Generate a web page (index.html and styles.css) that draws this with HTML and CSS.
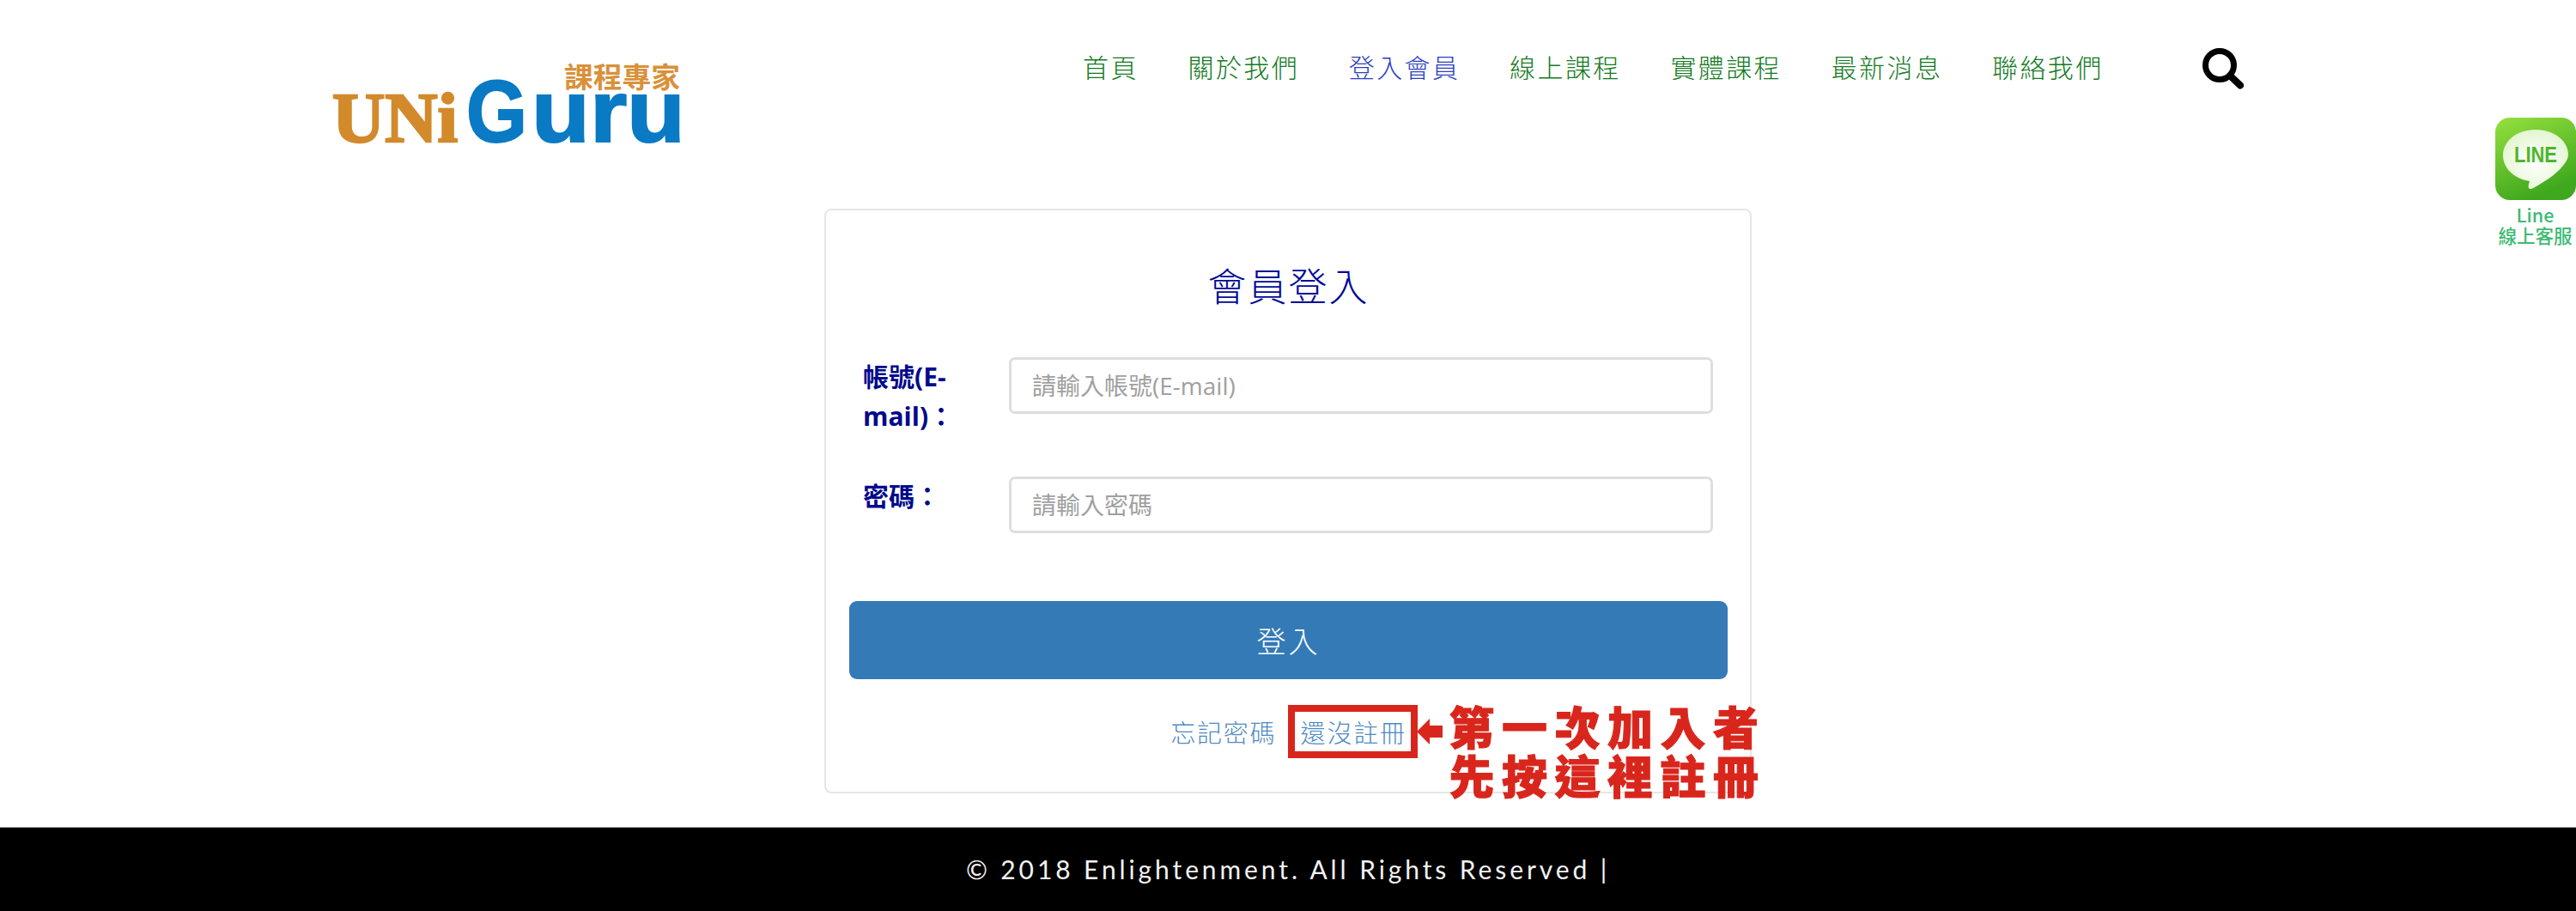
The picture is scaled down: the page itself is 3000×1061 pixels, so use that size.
FILE: index.html
```html
<!DOCTYPE html>
<html lang="zh-Hant">
<head>
<meta charset="utf-8">
<title>會員登入</title>
<link rel="stylesheet" href="styles.css">
</head>
<body>
<header class="site-header">
  <a class="logo" href="#">
    <svg class="logo-svg" viewBox="0 0 500 170" width="500" height="170">
      <text class="logo-cjk" x="317" y="62" textLength="135" lengthAdjust="spacingAndGlyphs">課程專家</text>
      <text class="logo-uni" x="47" y="125" textLength="146" lengthAdjust="spacingAndGlyphs">UNi</text>
      <text class="logo-g" x="203" y="125" textLength="71" lengthAdjust="spacingAndGlyphs">G</text>
      <text class="logo-uru" x="279" y="125" textLength="179" lengthAdjust="spacingAndGlyphs">uru</text>
    </svg>
  </a>
  <nav class="main-nav">
    <a href="#">首頁</a>
    <a href="#">關於我們</a>
    <a href="#" class="active">登入會員</a>
    <a href="#">線上課程</a>
    <a href="#">實體課程</a>
    <a href="#">最新消息</a>
    <a href="#">聯絡我們</a>
  </nav>
  <a class="search" href="#" aria-label="搜尋">
    <svg viewBox="0 0 48 48" width="48" height="48">
      <circle cx="20" cy="20" r="16.5" fill="none" stroke="#000" stroke-width="7"/>
      <line x1="32" y1="32" x2="44" y2="43.5" stroke="#000" stroke-width="8" stroke-linecap="round"/>
    </svg>
  </a>
</header>

<a class="line-widget" href="#">
  <svg viewBox="0 0 94 96" width="94" height="96">
    <defs>
      <linearGradient id="lineBg" x1="0" y1="0" x2="0.4" y2="1">
        <stop offset="0" stop-color="#96e03e"/>
        <stop offset="1" stop-color="#3fa81e"/>
      </linearGradient>
      <radialGradient id="lineBubble" cx="0.5" cy="0.55" r="0.6">
        <stop offset="0" stop-color="#ffffff"/>
        <stop offset="1" stop-color="#e2f5cd"/>
      </radialGradient>
    </defs>
    <rect width="94" height="96" rx="17" fill="url(#lineBg)"/>
    <path d="M47 14C24 14 9 28 9 44c0 15 13 27 31 30-1 3-2 6-1 8 1 2 4 1 7-1 9-5 24-14 32-24 4-5 7-9 7-14C85 28 70 14 47 14Z" fill="url(#lineBubble)"/>
    <text class="line-logo" x="47" y="52" textLength="50" lengthAdjust="spacingAndGlyphs" text-anchor="middle">LINE</text>
  </svg>
  <span class="line-label">Line<br>線上客服</span>
</a>

<main class="page-main">
  <section class="login-card">
    <h1 class="card-title">會員登入</h1>
    <form class="login-form">
      <div class="form-row">
        <label class="form-label" for="acct">帳號(E-mail)：</label>
        <input class="form-input" id="acct" type="text" placeholder="請輸入帳號(E-mail)">
      </div>
      <div class="form-row">
        <label class="form-label" for="pw">密碼：</label>
        <input class="form-input" id="pw" type="text" placeholder="請輸入密碼">
      </div>
      <button class="submit-btn" type="button">登入</button>
    </form>
    <p class="card-links">
      <a href="#">忘記密碼</a>
      <a href="#" class="register-link">還沒註冊
        <span class="callout-box"></span>
        <svg class="callout-arrow" viewBox="0 0 30 30" width="30" height="30"><path d="M0 15 15 0V8H30V22H15V30Z" fill="#d9261c"/></svg>
        <span class="callout-text">第一次加入者<br>先按這裡註冊</span>
      </a>
    </p>
  </section>
</main>

<footer class="site-footer">© 2018 Enlightenment. All Rights Reserved |</footer>
</body>
</html>
```

FILE: styles.css
```css
* { box-sizing: border-box; }
html, body { margin: 0; padding: 0; }
body {
  width: 3000px;
  height: 1061px;
  overflow: hidden;
  position: relative;
  display: flex;
  flex-direction: column;
  background: #fff;
  font-family: "Open Sans", "Noto Sans CJK TC", sans-serif;
}
a { text-decoration: none; }

/* header */
.site-header {
  height: 243px;
  flex: none;
  display: flex;
  align-items: flex-start;
  padding-left: 340px;
}
.logo { display: block; margin-top: 40px; height: 170px; width: 500px; flex: none; }
.logo-svg { display: block; }
.logo-cjk { font: 700 33px "Noto Sans CJK TC", sans-serif; fill: #d9913a; }
.logo-uni { font: 700 82px "Liberation Serif", serif; fill: #d38a2b; stroke: #d38a2b; stroke-width: 2.5px; }
.logo-g { font: 700 102px "Liberation Sans", sans-serif; fill: #0a7ac4; stroke: #0a7ac4; stroke-width: 2px; }
.logo-uru { font: 700 102px "Liberation Sans", sans-serif; fill: #0a7ac4; stroke: #0a7ac4; stroke-width: 2px; }

.main-nav {
  display: flex;
  gap: 57.7px;
  margin-left: 421px;
  margin-top: 55px;
}
.main-nav a {
  font: 300 30px/44px "Noto Sans CJK TC", sans-serif;
  letter-spacing: 2.4px;
  color: #157a1f;
}
.main-nav a.active { color: #2a3fc0; }
.search { display: block; margin-left: 115px; margin-top: 56px; height: 48px; }
.search svg { display: block; }

/* LINE widget */
.line-widget {
  position: absolute;
  top: 137px;
  left: 2905px;
  width: 95px;
  display: flex;
  flex-direction: column;
  align-items: center;
}
.line-widget svg { display: block; flex: none; }
.line-logo { font: 700 25px "Liberation Sans", sans-serif; fill: #4fb52c; }
.line-label {
  margin-top: 5px;
  font: 500 21.5px/24px "Noto Sans CJK TC", sans-serif;
  color: #3dba74;
  text-align: center;
  white-space: nowrap;
}

/* main */
.page-main { flex: 1; display: flex; justify-content: center; align-items: flex-start; }
.login-card {
  width: 1080px;
  height: 681px;
  border: 2px solid #e6e6e6;
  border-radius: 8px;
  padding: 0 26px 0 27px;
  display: flex;
  flex-direction: column;
}
.card-title {
  margin: 57px 0 0;
  height: 60px;
  text-align: center;
  font: 300 45px/60px "Noto Sans CJK TC", sans-serif;
  letter-spacing: 2px;
  color: #000a96;
}
.login-form { margin-top: 54px; display: flex; flex-direction: column; }
.form-row { display: flex; align-items: flex-start; height: 139px; }
.form-label {
  width: 186px;
  flex: none;
  padding-left: 16px;
  padding-right: 50px;
  font-size: 30px;
  line-height: 46px;
  font-weight: 700;
  color: #000a8c;
}
.form-input {
  width: 820px;
  height: 66px;
  border: 3px solid #dedede;
  border-radius: 7px;
  padding: 0 24px;
  font: 400 28px "Open Sans", "Noto Sans CJK TC", sans-serif;
  color: #555;
  background: #fff;
  outline: none;
}
.form-input::placeholder { color: #a0a0a0; opacity: 1; font-weight: 400; }
.submit-btn {
  margin-top: 6px;
  height: 91px;
  border: 0;
  border-radius: 9px;
  background: #337ab7;
  color: #fff;
  font: 300 34px "Noto Sans CJK TC", sans-serif;
  letter-spacing: 3px;
}
.card-links {
  margin: 39px 0 0;
  text-align: center;
  font: 300 29px/44px "Noto Sans CJK TC", sans-serif;
  letter-spacing: 1.8px;
  word-spacing: 20px;
}
.card-links a { color: #4f8ac2; }
.register-link { position: relative; display: inline-block; }
.callout-box {
  position: absolute;
  left: -15px;
  top: -9px;
  width: 151px;
  height: 62px;
  border: 8px solid #d9261c;
}
.callout-arrow { position: absolute; left: 135px; top: 7px; }
.callout-text {
  position: absolute;
  left: 173px;
  top: -13px;
  white-space: nowrap;
  font: 900 53px/57px "Noto Sans CJK TC", sans-serif;
  letter-spacing: 8.5px;
  word-spacing: 0;
  -webkit-text-stroke: 1px #d9261c;
  color: #d9261c;
  text-align: left;
}

/* footer */
.site-footer {
  height: 98px;
  flex: none;
  background: #000;
  border-top: 1px solid #aaa;
  color: #f2f2f2;
  text-align: center;
  font: 400 30px/96px Lato, sans-serif;
  letter-spacing: 3.9px;
}
```
